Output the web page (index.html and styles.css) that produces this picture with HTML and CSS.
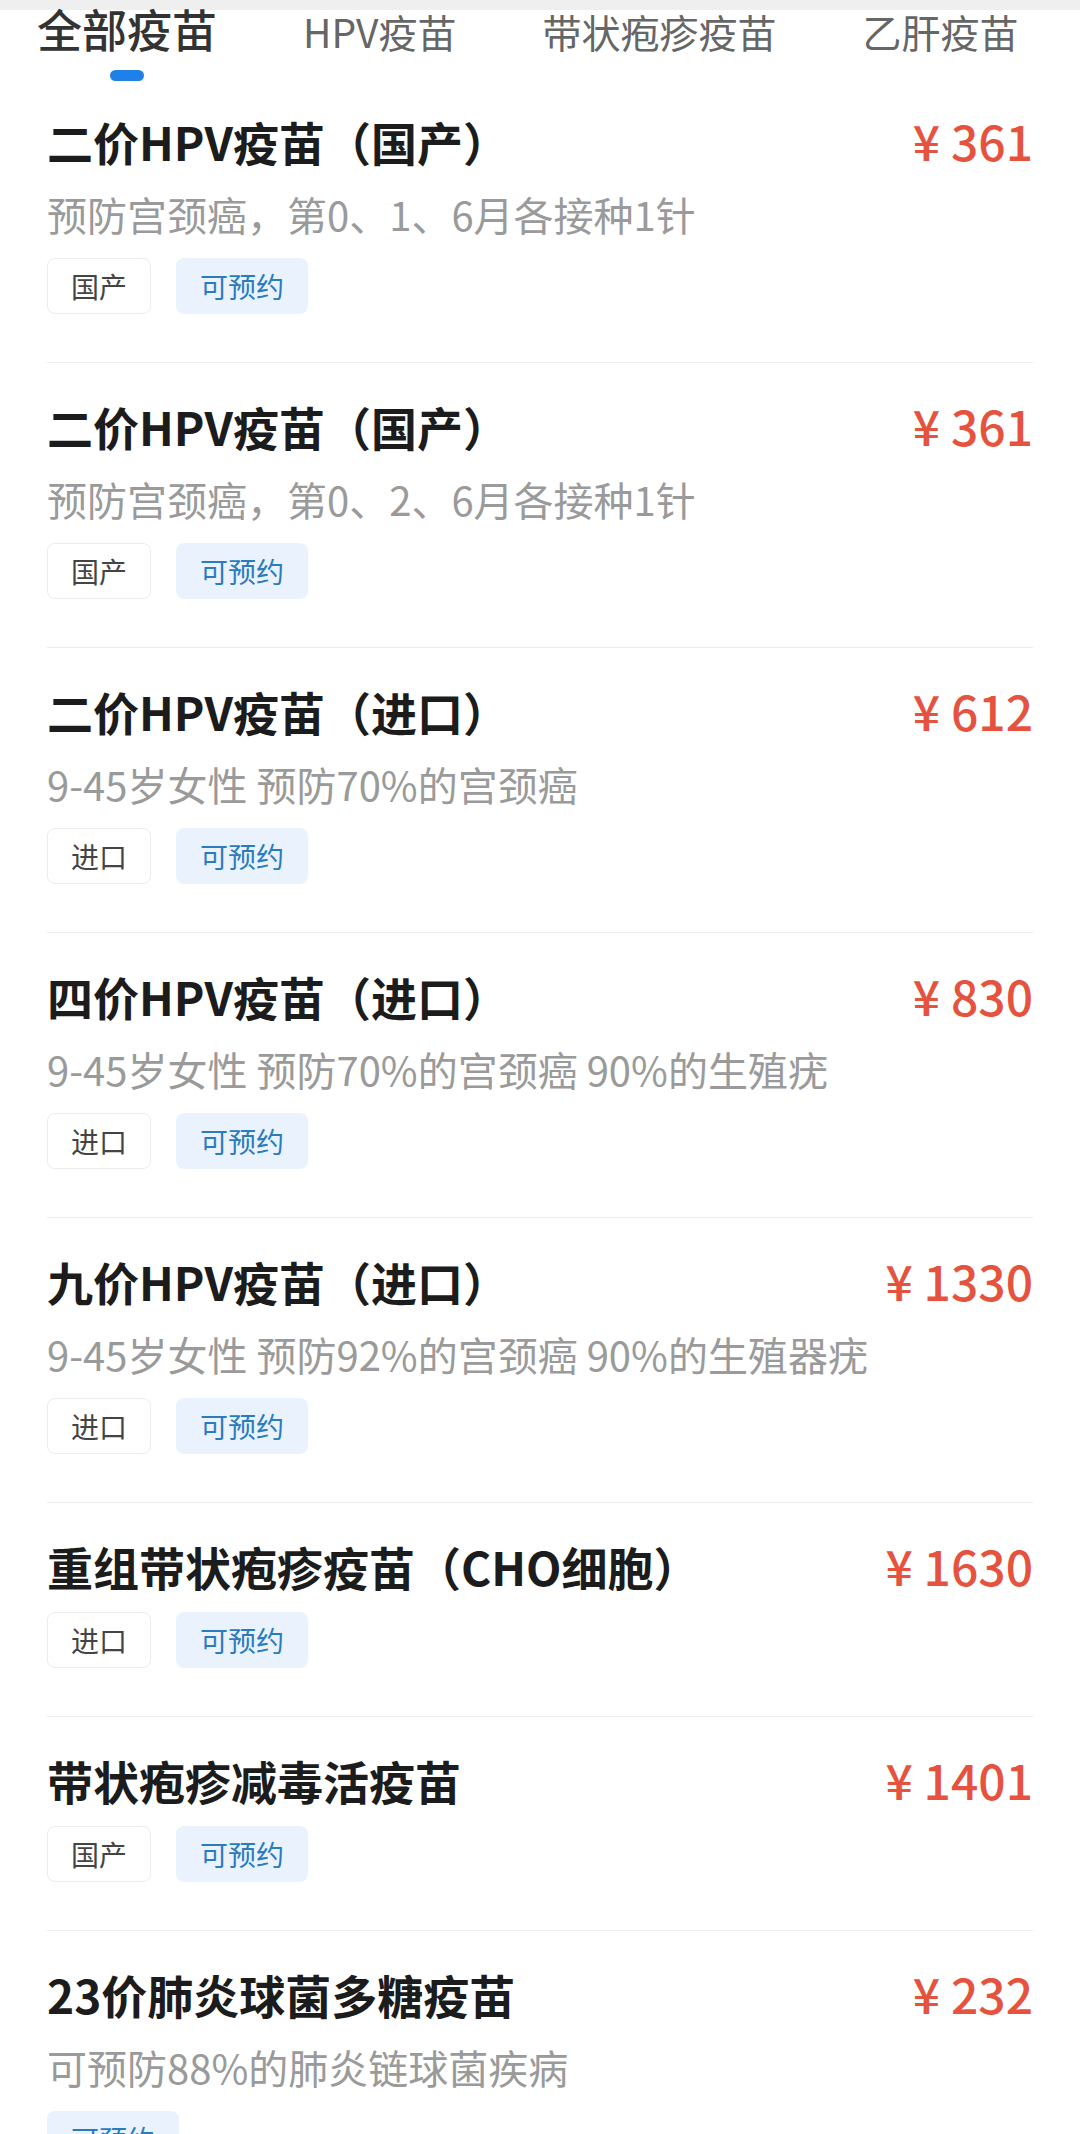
FILE: index.html
```html
<!DOCTYPE html>
<html lang="zh-CN">
<head>
<meta charset="utf-8">
<title>疫苗列表</title>
<link rel="stylesheet" href="styles.css">
</head>
<body>
<div class="topband"></div>
<nav class="tabbar">
  <div class="tab active"><span class="tab-text">全部疫苗</span><span class="indicator"></span></div>
  <div class="tab"><span class="tab-text">HPV疫苗</span></div>
  <div class="tab"><span class="tab-text">带状疱疹疫苗</span></div>
  <div class="tab"><span class="tab-text">乙肝疫苗</span></div>
</nav>
<main class="list">
  <section class="item">
    <div class="row"><h2 class="title">二价HPV疫苗（国产）</h2><span class="price">¥ 361</span></div>
    <p class="desc">预防宫颈癌，第0、1、6月各接种1针</p>
    <div class="tags"><span class="tag plain">国产</span><span class="tag avail">可预约</span></div>
  </section>
  <section class="item">
    <div class="row"><h2 class="title">二价HPV疫苗（国产）</h2><span class="price">¥ 361</span></div>
    <p class="desc">预防宫颈癌，第0、2、6月各接种1针</p>
    <div class="tags"><span class="tag plain">国产</span><span class="tag avail">可预约</span></div>
  </section>
  <section class="item">
    <div class="row"><h2 class="title">二价HPV疫苗（进口）</h2><span class="price">¥ 612</span></div>
    <p class="desc">9-45岁女性 预防70%的宫颈癌</p>
    <div class="tags"><span class="tag plain">进口</span><span class="tag avail">可预约</span></div>
  </section>
  <section class="item">
    <div class="row"><h2 class="title">四价HPV疫苗（进口）</h2><span class="price">¥ 830</span></div>
    <p class="desc">9-45岁女性 预防70%的宫颈癌 90%的生殖疣</p>
    <div class="tags"><span class="tag plain">进口</span><span class="tag avail">可预约</span></div>
  </section>
  <section class="item">
    <div class="row"><h2 class="title">九价HPV疫苗（进口）</h2><span class="price">¥ 1330</span></div>
    <p class="desc">9-45岁女性 预防92%的宫颈癌 90%的生殖器疣</p>
    <div class="tags"><span class="tag plain">进口</span><span class="tag avail">可预约</span></div>
  </section>
  <section class="item">
    <div class="row"><h2 class="title">重组带状疱疹疫苗（CHO细胞）</h2><span class="price">¥ 1630</span></div>
    <div class="tags"><span class="tag plain">进口</span><span class="tag avail">可预约</span></div>
  </section>
  <section class="item">
    <div class="row"><h2 class="title">带状疱疹减毒活疫苗</h2><span class="price">¥ 1401</span></div>
    <div class="tags"><span class="tag plain">国产</span><span class="tag avail">可预约</span></div>
  </section>
  <section class="item">
    <div class="row"><h2 class="title">23价肺炎球菌多糖疫苗</h2><span class="price">¥ 232</span></div>
    <p class="desc">可预防88%的肺炎链球菌疾病</p>
    <div class="tags"><span class="tag avail">可预约</span></div>
  </section>
</main>
</body>
</html>
```
FILE: styles.css
```css
html, body {
  margin: 0;
  padding: 0;
  background: #ffffff;
}
body {
  font-family: "Noto Sans CJK SC", "Noto Sans", sans-serif;
  color: #1c1c1c;
  overflow: hidden;
}
.topband {
  height: 10px;
  background: #efefef;
}
.tabbar {
  display: flex;
  align-items: baseline;
  gap: 86px;
  padding-left: 37px;
  height: 68px;
  white-space: nowrap;
  overflow: visible;
}
.tab {
  display: flex;
  flex-direction: column;
  align-items: center;
  flex: none;
}
.tab-text {
  font-size: 39px;
  line-height: 38px;
  color: #666666;
  font-weight: 400;
}
.tab.active .tab-text {
  font-size: 45px;
  color: #333333;
  font-weight: 500;
}
.indicator {
  display: block;
  width: 34px;
  height: 11px;
  margin-top: 22px;
  border-radius: 6px;
  background: #1f80e8;
}
.list {
  padding: 0 47px;
}
.item {
  padding: 32px 0 48px;
  border-bottom: 1px solid #ececec;
}
.row {
  display: flex;
  justify-content: space-between;
  align-items: baseline;
}
.title {
  margin: 0;
  font-size: 46px;
  line-height: 60px;
  font-weight: 700;
  color: #1c1c1c;
}
.price {
  font-size: 48px;
  line-height: 60px;
  font-weight: 500;
  color: #e5533f;
}
.desc {
  margin: 15px 0 0;
  font-size: 40px;
  line-height: 56px;
  color: #9a9a9a;
}
.tags {
  display: flex;
  gap: 25px;
  margin-top: 16px;
}
.tag {
  box-sizing: border-box;
  height: 56px;
  line-height: 54px;
  padding: 0 23px;
  font-size: 28px;
  border-radius: 8px;
  border: 1px solid transparent;
}
.tag.plain {
  border-color: #ececec;
  color: #444444;
  background: #ffffff;
}
.tag.avail {
  background: #eaf3fd;
  color: #2b7bbf;
}
```
